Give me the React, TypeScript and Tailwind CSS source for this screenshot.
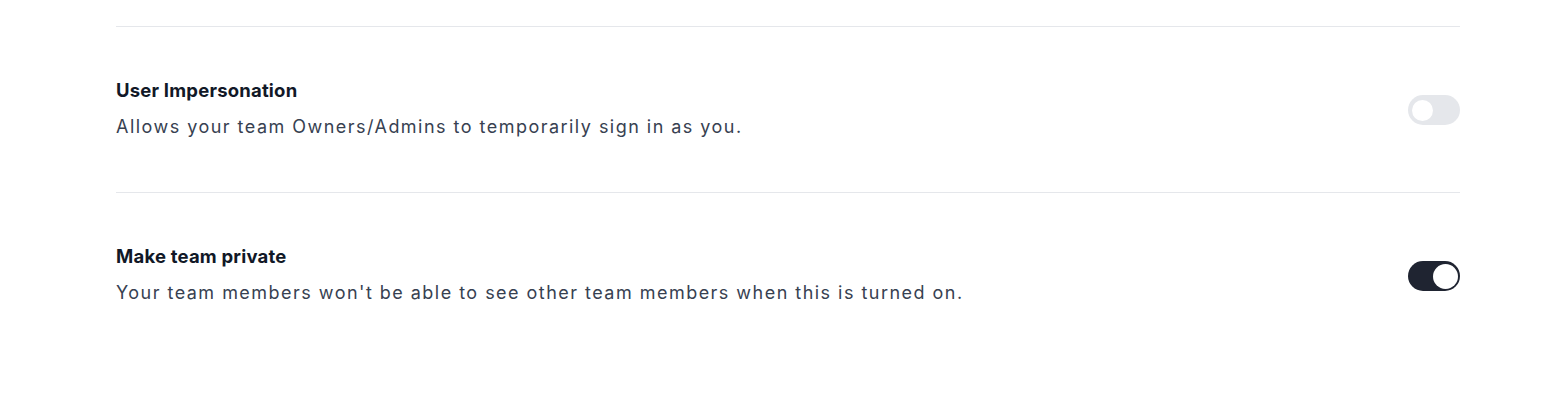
import { useState } from "react";

interface SettingProps {
  title: string;
  description: string;
  checked: boolean;
  onToggle: () => void;
}

const Toggle = ({ checked, onToggle }: { checked: boolean; onToggle: () => void }) => (
  <button
    onClick={onToggle}
    className={
      checked
        ? "mt-[17px] flex h-[30px] w-[52px] shrink-0 items-center justify-end rounded-full bg-[#1f2431] pr-[2px]"
        : "mt-[17px] flex h-[30px] w-[52px] shrink-0 items-center justify-start rounded-full bg-[#e5e7eb] pl-[4px]"
    }
  >
    <span
      className={
        checked
          ? "h-[25px] w-[25px] rounded-full bg-white"
          : "h-[21px] w-[21px] rounded-full bg-white"
      }
    />
  </button>
);

const SettingRow = ({ title, description, checked, onToggle }: SettingProps) => (
  <div className="flex items-start justify-between border-t border-[#e5e7eb] pt-[51px] pb-[53px]">
    <div className="flex flex-col">
      <h3 className="text-[18.5px] font-bold leading-[24px] tracking-[0.2px] text-[#111827]">
        {title}
      </h3>
      <p className="mt-[13px] text-[18px] leading-[24px] tracking-[1.47px] text-[#374151]">
        {description}
      </p>
    </div>
    <Toggle checked={checked} onToggle={onToggle} />
  </div>
);

const App = () => {
  const [impersonation, setImpersonation] = useState(false);
  const [privateTeam, setPrivateTeam] = useState(true);

  return (
    <div
      className="min-h-[399px] w-full bg-white pl-[116px] pr-[90px] pt-[26px]"
      style={{ fontFamily: "Inter, 'Noto Sans', sans-serif" }}
    >
      <SettingRow
        title="User Impersonation"
        description="Allows your team Owners/Admins to temporarily sign in as you."
        checked={impersonation}
        onToggle={() => setImpersonation(!impersonation)}
      />
      <SettingRow
        title="Make team private"
        description="Your team members won't be able to see other team members when this is turned on."
        checked={privateTeam}
        onToggle={() => setPrivateTeam(!privateTeam)}
      />
    </div>
  );
};

export default App;
